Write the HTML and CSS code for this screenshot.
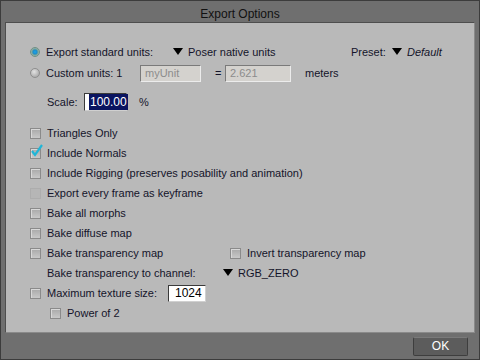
FILE: index.html
```html
<!DOCTYPE html>
<html lang="en">
<head>
  <meta charset="UTF-8" />
  <title>Export Options</title>
  <link rel="stylesheet" href="styles.css">
</head>
<body>

<div class="window">
  <div class="title">Export Options</div>

  <!-- Main options panel -->
  <div class="panel">
    <div class="row units-row">
      <span class="radio on"></span>
      <span class="label w-units">Export standard units:</span>
      <span class="tri"></span>
      <span class="label w-poser">Poser native units</span>
      <span class="label w-preset">Preset:</span>
      <span class="tri"></span>
      <span class="label preset">Default</span>
    </div>
    <div class="row custom-row">
      <span class="radio"></span>
      <span class="label w-custom">Custom units: 1</span>
      <span class="field disabled w-unit">myUnit</span>
      <span class="label eq">=</span>
      <span class="field disabled w-val">2.621</span>
      <span class="label">meters</span>
    </div>
    <div class="row scale-row">
      <span class="label w-scale">Scale:</span>
      <span class="field sel"><span class="hl">100.00</span><span class="caret"></span></span>
      <span class="label">%</span>
    </div>

    <div class="checks">
      <div class="row"><span class="box"></span><span class="label">Triangles Only</span></div>
      <div class="row"><span class="box checked"><svg width="14" height="14" viewBox="0 0 14 14"><path d="M2 7 L5 11 L12 1" fill="none" stroke="#1fb6d8" stroke-width="2.2"/></svg></span><span class="label">Include Normals</span></div>
      <div class="row"><span class="box"></span><span class="label">Include Rigging (preserves posability and animation)</span></div>
      <div class="row"><span class="box off"></span><span class="label">Export every frame as keyframe</span></div>
      <div class="row"><span class="box"></span><span class="label">Bake all morphs</span></div>
      <div class="row"><span class="box"></span><span class="label">Bake diffuse map</span></div>
      <div class="row">
        <span class="box"></span><span class="label w-bake">Bake transparency map</span>
        <span class="box"></span><span class="label">Invert transparency map</span>
      </div>
      <div class="row">
        <span class="label w-chan">Bake transparency to channel:</span>
        <span class="tri"></span><span class="label">RGB_ZERO</span>
      </div>
      <div class="row">
        <span class="box"></span><span class="label w-max">Maximum texture size:</span>
        <span class="field w-tex">1024</span>
      </div>
      <div class="row sub"><span class="box"></span><span class="label">Power of 2</span></div>
    </div>
  </div>

  <div class="footer">
    <button class="ok">OK</button>
  </div>
</div>

</body>
</html>
```

FILE: styles.css
```css
body {
  margin: 0;
  font-family: 'Liberation Sans', Arial, sans-serif;
  font-size: 11px;
  color: #14142a;
}

.window {
  width: 480px;
  height: 360px;
  box-sizing: border-box;
  background-color: #6f6f6f;
  border: 1px solid #3c3c3c;
  display: flex;
  flex-direction: column;
}

.title {
  height: 21px;
  line-height: 26px;
  text-align: center;
  color: #111;
  font-size: 12px;
}

.panel {
  margin: 0 4px 0 4px;
  height: 311px;
  box-sizing: border-box;
  background-color: #b9b9b9;
  border-top: 1px solid #4e4e4e;
  border-left: 1px solid #4e4e4e;
  border-right: 1px solid #8a8a8a;
  border-bottom: 1px solid #8a8a8a;
  padding: 19px 0 0 24px;
}

.row {
  display: flex;
  align-items: center;
  height: 20px;
}

.label {
  white-space: nowrap;
}

.custom-row {
  margin-top: 1px;
}

.scale-row {
  margin-top: 9px;
  padding-left: 17px;
}

.checks {
  margin-top: 11px;
}

.sub {
  padding-left: 20px;
}

/* widths for column alignment */
.w-units { width: 127px; }
.w-poser { width: 163px; }
.w-preset { width: 41px; }
.w-custom { width: 94px; }
.w-unit { width: 61px; margin-right: 14px; }
.eq { width: 10px; }
.w-val { width: 66px; margin-right: 14px; }
.w-scale { width: 37px; }
.w-bake { width: 183px; }
.w-chan { width: 176px; padding-left: 17px; }
.w-max { width: 121px; }

.preset {
  font-style: italic;
}

.tri {
  width: 0;
  height: 0;
  border-left: 5px solid transparent;
  border-right: 5px solid transparent;
  border-top: 7px solid #000;
  margin: 0 5px 2px 0;
}

.radio {
  width: 10px;
  height: 10px;
  box-sizing: border-box;
  border-radius: 50%;
  background: radial-gradient(circle at 40% 35%, #e2e2e2, #9a9a9a);
  border: 1px solid #8e8e8e;
  margin-right: 6px;
}

.radio.on {
  background: radial-gradient(circle, #1ca6e8 0, #1c8ccc 35%, #7aa49a 55%, #c6d2cc 100%);
  border-color: #6f8f86;
}

.box {
  width: 11px;
  height: 11px;
  box-sizing: border-box;
  border: 1px solid #8a8a8a;
  background: linear-gradient(#a9a9a9, #c8c8c8);
  box-shadow: inset 1px 1px 0 #d8d8d8;
  margin-right: 6px;
  position: relative;
}

.box.off {
  border-color: #adadad;
  background: #b6b6b6;
  box-shadow: none;
}

.box svg {
  position: absolute;
  left: -1px;
  top: -5px;
}

.field {
  height: 17px;
  line-height: 15px;
  box-sizing: border-box;
  background: #fff;
  border: 1px solid #3a3a3a;
  border-right-color: #d0d0d0;
  border-bottom-color: #d0d0d0;
  padding-left: 4px;
  color: #000;
  font-size: 12px;
}

.field.disabled {
  background: #d4d2ce;
  color: #8c8c8c;
  border: 1px solid #7a7a7a;
  border-right-color: #ececec;
  border-bottom-color: #ececec;
  font-size: 11px;
}

.field.sel {
  width: 43px;
  padding-left: 4px;
  margin-right: 12px;
  height: 18px;
  line-height: 16px;
  display: flex;
  align-items: center;
}

.hl {
  background: #0a1460;
  color: #fff;
  padding: 0 1px;
}

.caret {
  width: 1px;
  height: 14px;
  background: #e0a020;
  margin-left: 1px;
}

.w-tex {
  width: 38px;
  padding-left: 6px;
}

.footer {
  flex: 1;
  display: flex;
  justify-content: flex-end;
  align-items: center;
  padding-right: 11px;
}

.ok {
  width: 55px;
  height: 19px;
  font-family: 'Liberation Sans', Arial, sans-serif;
  font-size: 12px;
  color: #fff;
  background: #5c5c5c;
  border: 1px solid #3e3e3e;
  border-top-color: #7a7a7a;
  border-radius: 2px;
  padding: 0;
}
```
